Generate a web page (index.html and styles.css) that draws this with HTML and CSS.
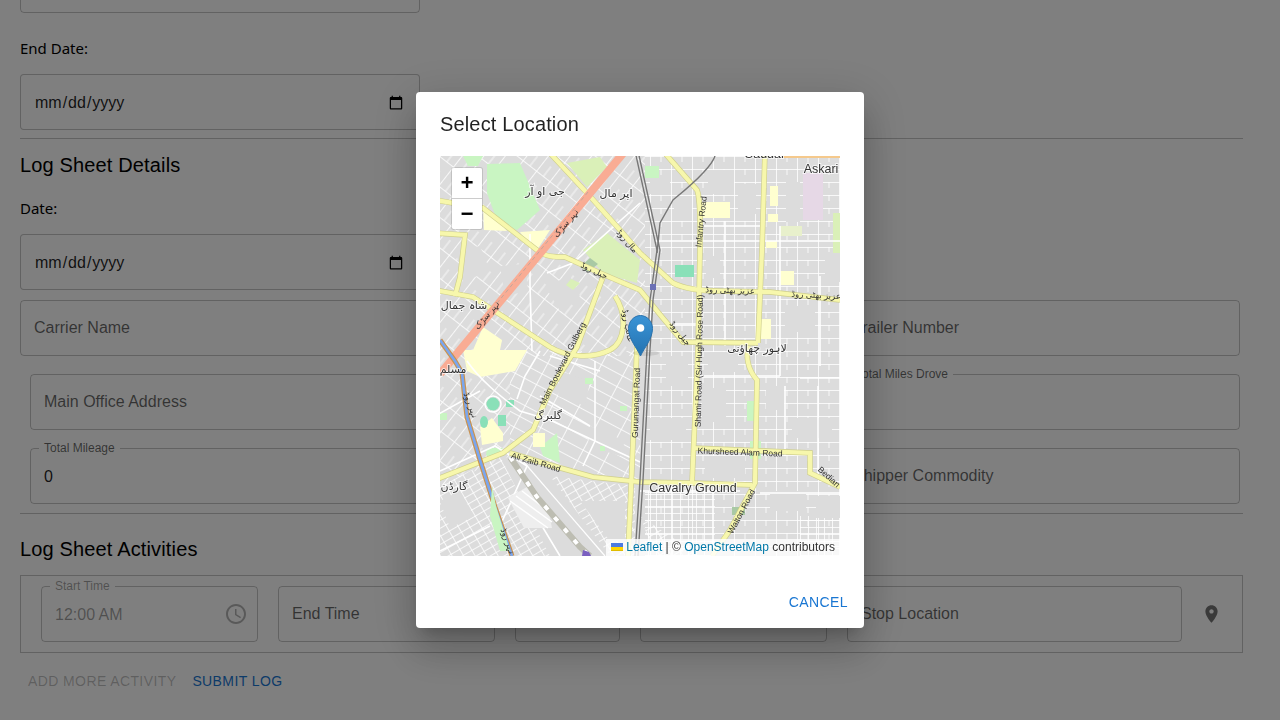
FILE: index.html
```html
<!DOCTYPE html>
<html lang="en">
<head>
  <meta charset="UTF-8">
  <title>Log Sheet</title>
  <meta name="viewport" content="width=device-width, initial-scale=1.0">
  <link rel="stylesheet" href="styles.css">
</head>
<body>
  <!-- Form behind the dialog, scrolled down a bit -->
  <div class="page">
    <div class="field field-first"></div>

    <div class="date-label date-label-end">End Date:</div>
    <input class="date-input" type="date">
    <div class="divider divider-one"></div>

    <h2 class="section-title section-details">Log Sheet Details</h2>
    <div class="date-label date-label-log">Date:</div>
    <input class="date-input" type="date">

    <div class="row row-carrier">
      <div class="field field-left"><span class="field-text">Carrier Name</span></div>
      <div class="field field-right"><span class="field-text">Trailer Number</span></div>
    </div>
    <div class="row row-office">
      <div class="field field-left"><span class="field-text">Main Office Address</span></div>
      <div class="field field-miles"><span class="notch">Total Miles Drove</span></div>
    </div>
    <div class="row row-office">
      <div class="field field-left">
        <span class="notch">Total Mileage</span>
        <span class="field-value">0</span>
      </div>
      <div class="field field-right"><span class="field-text">Shipper Commodity</span></div>
    </div>
    <div class="divider divider-two"></div>

    <h2 class="section-title section-activities">Log Sheet Activities</h2>
    <div class="activity-box">
      <div class="field time-field disabled">
        <span class="notch">Start Time</span>
        <span class="field-value">12:00 AM</span>
        <svg class="clock-icon" viewBox="0 0 24 24"><path d="M11.99 2C6.47 2 2 6.48 2 12s4.47 10 9.99 10C17.52 22 22 17.52 22 12S17.52 2 11.99 2zM12 20c-4.42 0-8-3.58-8-8s3.58-8 8-8 8 3.58 8 8-3.58 8-8 8zm.5-13H11v6l5.25 3.15.75-1.23-4.5-2.67z"/></svg>
      </div>
      <div class="field time-field"><span class="field-text">End Time</span></div>
      <div class="field small-field"></div>
      <div class="field remark-field"></div>
      <div class="field stop-field"><span class="field-text">Stop Location</span></div>
      <svg class="pin-icon" viewBox="0 0 24 24"><path d="M12 2C8.13 2 5 5.13 5 9c0 5.25 7 13 7 13s7-7.75 7-13c0-3.87-3.13-7-7-7zm0 9.5c-1.38 0-2.5-1.12-2.5-2.5s1.12-2.5 2.5-2.5 2.5 1.12 2.5 2.5-1.12 2.5-2.5 2.5z"/></svg>
    </div>

    <div class="form-actions">
      <button class="text-btn" disabled>Add More Activity</button>
      <button class="text-btn primary">Submit Log</button>
    </div>
  </div>

  <!-- Location dialog -->
  <div class="overlay">
    <div class="dialog">
      <h2 class="dialog-title">Select Location</h2>
      <div class="dialog-content">
        <div class="map">
          <svg class="map-tiles" viewBox="0 0 400 400">
            <defs>
              <pattern id="grid-east" width="21" height="13" patternUnits="userSpaceOnUse">
                <path d="M0 .5H21M.5 0V13M11 0V6" class="street-thin"/>
              </pattern>
              <pattern id="grid-west" width="17" height="24" patternUnits="userSpaceOnUse" patternTransform="rotate(38)">
                <path d="M0 .5H17M.5 0V24M9 12V24" class="street-thin"/>
              </pattern>
              <pattern id="grid-mid" width="24" height="12" patternUnits="userSpaceOnUse" patternTransform="rotate(28)">
                <path d="M0 .5H24M.5 0V12" class="street-thin"/>
              </pattern>
              <pattern id="grid-dense" width="8" height="7" patternUnits="userSpaceOnUse">
                <path d="M0 .5H8M.5 0V7" class="street-thin"/>
              </pattern>
              <pattern id="grid-diag" width="10" height="7" patternUnits="userSpaceOnUse" patternTransform="rotate(-30)">
                <path d="M0 .5H10M.5 0V7" class="street-thin"/>
              </pattern>
              <linearGradient id="marker-fill" x1="0" y1="0" x2="0" y2="1">
                <stop offset="0" stop-color="#3a94d6"/>
                <stop offset="1" stop-color="#2472b0"/>
              </linearGradient>
              <g id="yellow-roads">
                <path d="M108 -5L147 37 180 74 200 97 233 127C245 133 260 135 280 135L330 136 400 144"/>
                <path d="M223 -5L257 34C261 44 260 70 260 94L258 194 252 327"/>
                <path d="M325 -5L322 94 318 187"/>
                <path d="M309 190C305 200 308 214 317 224L315 327 290 374 272 400"/>
                <path d="M-5 44L43 52 97 94C105 101 115 101 125 101L160 117 200 134 222 161 243 186 318 187"/>
                <path d="M-5 77L25 79 20 121 15 140"/>
                <path d="M-5 134L33 141 53 154 110 191C125 200 150 204 170 194 185 186 188 160 175 140"/>
                <path d="M163 121L137 191 110 234 93 274 63 297 -5 324"/>
                <path d="M197 190L192 310 188 400"/>
                <path d="M70 297L117 311 153 321 200 326 252 327 312 329"/>
                <path d="M253 292L370 297 370 317 400 331"/>
              </g>
            </defs>

            <g class="tiles">
              <rect class="ground" width="400" height="400"/>

              <!-- street blocks -->
              <rect x="205" width="195" height="400" fill="url(#grid-east)"/>
              <rect width="205" height="200" fill="url(#grid-west)"/>
              <polygon points="70,195 200,195 200,325 120,312 70,297" fill="url(#grid-mid)"/>
              <polygon points="0,195 70,195 70,300 0,330" fill="url(#grid-west)"/>
              <polygon points="0,330 60,300 110,400 0,400" fill="url(#grid-diag)"/>
              <polygon points="110,320 195,330 195,400 170,400" fill="url(#grid-diag)"/>
              <rect x="205" y="335" width="70" height="65" fill="url(#grid-dense)"/>
              <polygon points="200,360 215,400 260,400" fill="url(#grid-diag)"/>
              <rect x="360" y="360" width="40" height="40" fill="url(#grid-dense)"/>

              <!-- plain grey blocks that break up the street grid -->
              <g class="ground">
                <rect x="210" y="22" width="20" height="16"/>
                <rect x="234" y="40" width="18" height="24"/>
                <rect x="268" y="14" width="26" height="24"/>
                <rect x="298" y="28" width="18" height="30"/>
                <rect x="346" y="26" width="14" height="40"/>
                <rect x="385" y="96" width="15" height="30"/>
                <rect x="266" y="100" width="14" height="22"/>
                <rect x="345" y="150" width="30" height="26"/>
                <rect x="226" y="200" width="22" height="30"/>
                <rect x="268" y="196" width="30" height="20"/>
                <rect x="210" y="262" width="36" height="22"/>
                <rect x="262" y="232" width="24" height="34"/>
                <rect x="265" y="300" width="40" height="22"/>
                <rect x="326" y="230" width="18" height="24"/>
                <rect x="352" y="262" width="40" height="20"/>
                <rect x="330" y="335" width="36" height="20"/>
                <rect x="376" y="340" width="24" height="22"/>
                <polygon points="120,215 150,225 145,250 118,240"/>
                <polygon points="150,270 185,285 180,300 148,290"/>
                <polygon points="105,130 130,120 140,140 120,155"/>
                <polygon points="15,95 40,90 50,115 25,125"/>
                <polygon points="60,110 85,108 88,135 65,140"/>
                <polygon points="140,345 185,345 185,385 170,385"/>
                <polygon points="0,345 20,335 34,360 10,372"/>
              </g>

              <!-- parks and landuse -->
              <g class="park">
                <polygon points="47,8 80,7 100,54 77,74 58,67 47,37"/>
                <polygon points="23,0 43,0 38,10 28,10"/>
                <polygon points="100,291 117,277 120,307 103,300"/>
                <polygon points="47,292 63,292 52,304 46,299"/>
                <rect x="205" y="10" width="14" height="12"/>
                <rect x="307" y="245" width="11" height="20"/>
                <rect x="310" y="285" width="11" height="18"/>
                <rect y="257" width="7" height="7"/>
                <rect x="160" y="290" width="5" height="5"/>
                <rect x="180" y="250" width="7" height="5"/>
                <rect x="145" y="222" width="8" height="6"/>
              </g>
              <g class="grass">
                <polygon points="167,77 200,104 197,127 163,117 143,94"/>
                <polygon points="127,7 160,1 167,11 147,31"/>
                <rect x="393" y="57" width="7" height="40"/>
                <polygon points="131,123 140,127 133,134 126,129"/>
              </g>
              <g class="residential">
                <polygon points="80,76 110,74 97,94 88,88"/>
                <polygon points="43,48 67,75 44,74"/>
                <polygon points="23,194 87,194 75,215 40,221 27,215"/>
                <polygon points="43,171 62,184 60,194 33,194"/>
                <polygon points="40,271 52,262 63,277 63,285 42,289"/>
                <rect x="93" y="277" width="12" height="14"/>
                <rect x="262" y="46" width="28" height="16"/>
                <rect x="328" y="58" width="10" height="8"/>
                <rect x="326" y="85" width="11" height="7"/>
                <rect x="320" y="163" width="11" height="20"/>
                <rect x="340" y="115" width="14" height="14"/>
                <rect x="330" y="30" width="8" height="20"/>
              </g>
              <g class="teal">
                <rect x="235" y="109" width="19" height="12"/>
                <circle cx="53" cy="248" r="6.500"/>
                <ellipse cx="44" cy="266" rx="4" ry="6"/>
                <rect x="58" y="259" width="8" height="11"/>
                <rect x="66" y="244" width="8" height="7"/>
              </g>
              <rect class="military" x="363" y="17" width="20" height="47"/>
              <rect class="lime" x="340" y="70" width="22" height="10"/>
              <rect class="orange" x="343" width="57" height="2"/>
              <rect class="deep-green" x="292" y="351" width="13" height="8"/>
              <polygon class="deep-green" points="150,102 158,108 148,116 140,111"/>
              <circle class="stadium-ring" cx="53" cy="248" r="8"/>

              <!-- white arterial streets -->
              <g class="street-wide">
                <path d="M107 117L133 107 200 47"/>
                <path d="M90 78V130L92 195"/>
                <path d="M27 205C40 224 60 240 80 255L110 264 155 285 200 306"/>
                <path d="M100 195L85 220 77 243"/>
                <path d="M155 205V285L143 310"/>
                <path d="M100 240L150 270M110 200L160 215"/>
                <path d="M215 85H400M235 168H258M262 70H325"/>
                <path d="M285 65V190M340 70V220M345 230V300M380 120V210M378 230V320"/>
                <path d="M260 220H340M360 222H400M200 335H300M320 337H400"/>
                <path d="M60 370L87 310 55 290 0 315"/>
                <path d="M40 235L-5 260"/>
                <path d="M120 400L87 345M50 370L0 395"/>
              </g>

              <!-- railway yard -->
              <polygon class="yard-white" points="68,342 92,328 108,352 112,372 84,372"/>
              <path class="yard-white-lines" d="M70 345L108 372M76 340L112 366M82 335L112 358"/>
              <path class="yard" d="M70 301L97 341 140 391 150 400"/>
              <path class="yard-dash" d="M70 301L97 341 140 391 150 400"/>
              <path class="yard-line" d="M76 297L165 400"/>

              <!-- main roads -->
              <use href="#yellow-roads" class="road-casing"/>
              <use href="#yellow-roads" class="road-fill"/>
              <path class="trunk" d="M185 -5L0 218"/>
              <path class="trunk-line" d="M148 36L40 168"/>

              <!-- railway lines -->
              <g class="rail">
                <path d="M195 -5L217 94 210 144 207 194 200 324 195 400"/>
                <path d="M198 -5L220 94 213 144 210 194 203 324 198 400"/>
                <path d="M275 0C270 15 240 38 233 44L220 67 217 97"/>
              </g>
              <rect class="rail-station" x="210" y="128" width="6" height="6"/>

              <!-- canal road -->
              <path class="canal-edge" d="M0 184L15 205 22 217 27 261 40 304 55 351 72 400"/>
              <path class="canal-blue" d="M0 184L15 205 22 217 27 261 40 304 55 351 72 400"/>
              <polygon class="park" points="52,330 56,350 70,395 60,395 50,360"/>
              <polygon class="purple" points="143,394 149,396 151,400 142,400"/>

              <!-- labels -->
              <g class="place">
                <text x="253" y="336" text-anchor="middle">Cavalry Ground</text>
                <text x="381" y="17" text-anchor="middle">Askari</text>
                <text x="325" y="2" text-anchor="middle">Saddar</text>
              </g>
              <g class="place-urdu">
                <text x="105" y="39" text-anchor="middle">جی او آر</text>
                <text x="176" y="41" text-anchor="middle">اپر مال</text>
                <text x="24" y="153" text-anchor="middle">شاہ جمال</text>
                <text x="317" y="196" text-anchor="middle">لاہور چھاؤنی</text>
                <text x="108" y="263" text-anchor="middle">گلبرگ</text>
                <text x="14" y="334" text-anchor="middle">گارڈن</text>
                <text x="13" y="217" text-anchor="middle">مسلم</text>
              </g>
              <g class="road-label">
                <text transform="translate(125 209) rotate(-63)" text-anchor="middle">Main Boulevard Gulberg</text>
                <text transform="translate(199 247) rotate(-88)" text-anchor="middle">Gurumangat Road</text>
                <text transform="translate(262 205) rotate(-89)" text-anchor="middle">Shami Road (Sir Hugh Rose Road)</text>
                <text transform="translate(264 66) rotate(-84)" text-anchor="middle">Infantry Road</text>
                <text transform="translate(300 299) rotate(2)" text-anchor="middle">Khursheed Alam Road</text>
                <text transform="translate(95 309) rotate(16)" text-anchor="middle">Ali Zaib Road</text>
                <text transform="translate(304 357) rotate(-62)" text-anchor="middle">Walton Road</text>
                <text transform="translate(387 323) rotate(42)" text-anchor="middle">Bedian</text>
                <text transform="translate(290 137) rotate(2)" text-anchor="middle">عزیز بھٹی روڈ</text>
                <text transform="translate(376 142) rotate(3)" text-anchor="middle">عزیز بھٹی روڈ</text>
                <text transform="translate(153 117) rotate(26)" text-anchor="middle">جیل روڈ</text>
                <text transform="translate(238 179) rotate(52)" text-anchor="middle">جیل روڈ</text>
                <text transform="translate(185 87) rotate(50)" text-anchor="middle">مال روڈ</text>
                <text transform="translate(185 170) rotate(80)" text-anchor="middle">غالب روڈ</text>
                <text transform="translate(128 69) rotate(-50)" text-anchor="middle">نہر سڑک</text>
                <text transform="translate(49 161) rotate(-50)" text-anchor="middle">نہر سڑک</text>
                <text transform="translate(28 250) rotate(70)" text-anchor="middle">نہر روڈ</text>
                <text transform="translate(65 386) rotate(70)" text-anchor="middle">نہر روڈ</text>
              </g>
            </g>

            <!-- marker -->
            <ellipse class="marker-shadow" cx="206" cy="197" rx="13" ry="3"/>
            <path class="marker-body" d="M200.500 200C197 192 188.500 183 188.500 172.500C188.500 165.500 194 159.500 200.500 159.500S212.500 165.500 212.500 172.500C212.500 183 204 192 200.500 200Z"/>
            <circle class="marker-dot" cx="200.500" cy="172" r="3.800"/>
          </svg>

          <div class="zoom-control">
            <button class="zoom-btn">+</button>
            <button class="zoom-btn">−</button>
          </div>

          <div class="attribution">
            <svg class="flag" viewBox="0 0 12 8"><rect width="12" height="4" fill="#4C7BE1"/><rect y="4" width="12" height="3" fill="#FFD500"/><rect y="7" width="12" height="1" fill="#E0BC00"/></svg>
            <a href="#">Leaflet</a> | © <a href="#">OpenStreetMap</a> contributors
          </div>
        </div>
      </div>
      <div class="dialog-actions">
        <button class="text-btn primary">Cancel</button>
      </div>
    </div>
  </div>
</body>
</html>
```

FILE: styles.css
```css
* {
  box-sizing: border-box;
}

html, body {
  margin: 0;
  padding: 0;
  height: 100%;
  overflow: hidden;
}

body {
  background: #fff;
  color: rgba(0, 0, 0, 0.87);
  font-family: "Liberation Sans", Arial, sans-serif;
}

/* form behind the dialog */
.page {
  margin-top: -43px;
  padding: 0 37px 0 20px;
}

.field {
  position: relative;
  height: 56px;
  border: 1px solid rgba(0, 0, 0, 0.23);
  border-radius: 4px;
  display: flex;
  align-items: center;
  padding: 0 13px;
  font-size: 16px;
  flex-shrink: 0;
}

.field-first {
  width: 400px;
}

.field-text {
  color: rgba(0, 0, 0, 0.6);
}

.field-value {
  color: rgba(0, 0, 0, 0.87);
  margin-top: 1px;
}

.notch {
  position: absolute;
  top: -7px;
  left: 8px;
  padding: 0 5px;
  background: #fff;
  font-size: 12px;
  line-height: 13px;
  color: rgba(0, 0, 0, 0.6);
}

.disabled .notch,
.disabled .field-value {
  color: rgba(0, 0, 0, 0.38);
}

.date-label {
  font-family: "Noto Sans", sans-serif;
  font-size: 15px;
  line-height: 20px;
  color: #000;
}

.date-label-end {
  margin: 25px 0 16px;
}

.date-label-log {
  margin: 21px 0 16px;
}

.date-input {
  display: block;
  width: 400px;
  height: 56px;
  padding: 1px 13px 0;
  border: 1px solid rgba(0, 0, 0, 0.23);
  border-radius: 4px;
  background: #fff;
  color: rgba(0, 0, 0, 0.87);
  font-family: "Liberation Sans", Arial, sans-serif;
  font-size: 16px;
}

.divider {
  height: 1px;
  background: rgba(0, 0, 0, 0.23);
}

.divider-one {
  margin-top: 8px;
}

.divider-two {
  margin-top: 9px;
}

.section-title {
  margin: 0;
  font-size: 20px;
  font-weight: 400;
  line-height: 24px;
  letter-spacing: 0.15px;
  color: #000;
}

.section-details {
  margin-top: 14px;
}

.section-activities {
  margin-top: 23px;
}

.row {
  display: flex;
  justify-content: space-between;
  width: 1220px;
}

.row-carrier {
  margin-top: 10px;
}

.row-office {
  margin-top: 18px;
  padding-left: 10px;
}

.field-left {
  width: 420px;
}

.field-right {
  width: 401px;
}

.field-miles {
  width: 398px;
}

.activity-box {
  display: flex;
  align-items: center;
  gap: 20px;
  height: 78px;
  margin-top: 14px;
  padding: 0 20px;
  border: 1px solid rgba(0, 0, 0, 0.23);
}

.time-field {
  width: 217px;
}

.small-field {
  width: 105px;
}

.remark-field {
  width: 187px;
}

.stop-field {
  width: 335px;
}

.clock-icon {
  position: absolute;
  right: 9px;
  top: 15px;
  width: 24px;
  height: 24px;
  fill: rgba(0, 0, 0, 0.3);
}

.pin-icon {
  width: 24px;
  height: 24px;
  margin-left: -1px;
  fill: rgba(0, 0, 0, 0.54);
}

.form-actions {
  display: flex;
  margin-top: 10px;
}

.text-btn {
  height: 36px;
  padding: 0 8px;
  border: none;
  background: none;
  font-family: "Liberation Sans", Arial, sans-serif;
  font-size: 14px;
  letter-spacing: 0.4px;
  text-transform: uppercase;
  cursor: pointer;
}

.text-btn:disabled {
  color: rgba(0, 0, 0, 0.26);
}

.primary {
  color: #1976d2;
}

/* dialog */
.overlay {
  position: fixed;
  top: 0;
  left: 0;
  width: 100%;
  height: 100%;
  display: flex;
  align-items: center;
  justify-content: center;
  background: rgba(0, 0, 0, 0.5);
}

.dialog {
  width: 448px;
  background: #fff;
  border-radius: 4px;
  box-shadow: 0 11px 15px -7px rgba(0, 0, 0, 0.2), 0 24px 38px 3px rgba(0, 0, 0, 0.14), 0 9px 46px 8px rgba(0, 0, 0, 0.12);
}

.dialog-title {
  margin: 0;
  padding: 16px 24px;
  font-size: 20px;
  font-weight: 400;
  line-height: 32px;
  letter-spacing: 0.15px;
}

.dialog-content {
  padding: 0 24px 20px;
}

.dialog-actions {
  display: flex;
  justify-content: flex-end;
  padding: 8px;
}

/* map */
.map {
  position: relative;
  width: 400px;
  height: 400px;
  overflow: hidden;
}

.map-tiles {
  display: block;
  width: 400px;
  height: 400px;
}

.tiles { filter: blur(0.35px); }

.ground { fill: #dcdcdc; }
.street-thin { fill: none; stroke: #fff; stroke-width: 1; opacity: 0.8; }
.street-wide { fill: none; stroke: #fff; stroke-width: 1.6; }
.park { fill: #c9f5c2; }
.grass { fill: #daf0b8; }
.residential { fill: #ffffd0; }
.teal { fill: #8ae0b8; }
.military { fill: #e6d8e6; }
.lime { fill: #e8f0cc; }
.orange { fill: #f5c98c; }
.deep-green { fill: #a9c9a4; }
.purple { fill: #7a5fc0; }
.stadium-ring { fill: none; stroke: #fff; stroke-width: 1.5; }

.yard { fill: none; stroke: #bdbdb2; stroke-width: 6; }
.yard-dash { fill: none; stroke: #fff; stroke-width: 4; stroke-dasharray: 5 10; }
.yard-line { fill: none; stroke: #fff; stroke-width: 1.2; }
.yard-white { fill: #eee; }
.yard-white-lines { fill: none; stroke: #fff; stroke-width: 1.5; }

.road-casing { fill: none; stroke: #cfcf8c; stroke-width: 5.5; }
.road-fill { fill: none; stroke: #f7f7ac; stroke-width: 4.2; }
.trunk { fill: none; stroke: #f9ac94; stroke-width: 8; }
.trunk-line { fill: none; stroke: #b5a49c; stroke-width: 0.8; stroke-dasharray: 4 3; }

.rail { fill: none; stroke: #777; stroke-width: 1.4; }
.rail-station { fill: #6b70b5; }

.canal-edge { fill: none; stroke: #c9924f; stroke-width: 5; }
.canal-blue { fill: none; stroke: #7aa6ee; stroke-width: 2.6; }

.place text {
  font-family: "Liberation Sans", "DejaVu Sans", sans-serif;
  font-size: 12.5px;
  fill: #333;
  stroke: rgba(255, 255, 255, 0.7);
  stroke-width: 2px;
  paint-order: stroke;
}

.place-urdu text {
  font-family: "DejaVu Sans", sans-serif;
  font-size: 11px;
  fill: #333;
  stroke: rgba(255, 255, 255, 0.7);
  stroke-width: 2px;
  paint-order: stroke;
}

.road-label text {
  font-family: "Liberation Sans", "DejaVu Sans", sans-serif;
  font-size: 8.5px;
  fill: #333;
}

.marker-shadow { fill: rgba(0, 0, 0, 0.08); }
.marker-body { fill: url(#marker-fill); stroke: #2a72ad; stroke-width: 1; }
.marker-dot { fill: #fff; }

.zoom-control {
  position: absolute;
  top: 12px;
  left: 12px;
  display: flex;
  flex-direction: column;
  width: 30px;
  border-radius: 2px;
  box-shadow: 0 0 0 1px rgba(0, 0, 0, 0.12);
}

.zoom-btn {
  width: 30px;
  height: 30px;
  padding: 3px 0 0;
  border: none;
  background: #fff;
  color: #000;
  font: bold 22px "Liberation Mono", monospace;
  text-align: center;
}

.zoom-btn:first-child {
  height: 31px;
  border-bottom: 1px solid #ccc;
  border-radius: 2px 2px 0 0;
}

.zoom-btn:last-child {
  border-radius: 0 0 2px 2px;
}

.attribution {
  position: absolute;
  right: 0;
  bottom: 0;
  padding: 0 5px;
  background: rgba(255, 255, 255, 0.8);
  color: #333;
  font-size: 12px;
  line-height: 17px;
}

.attribution a {
  color: #0078a8;
  text-decoration: none;
}

.flag {
  display: inline-block;
  width: 12px;
  height: 8px;
}
```
